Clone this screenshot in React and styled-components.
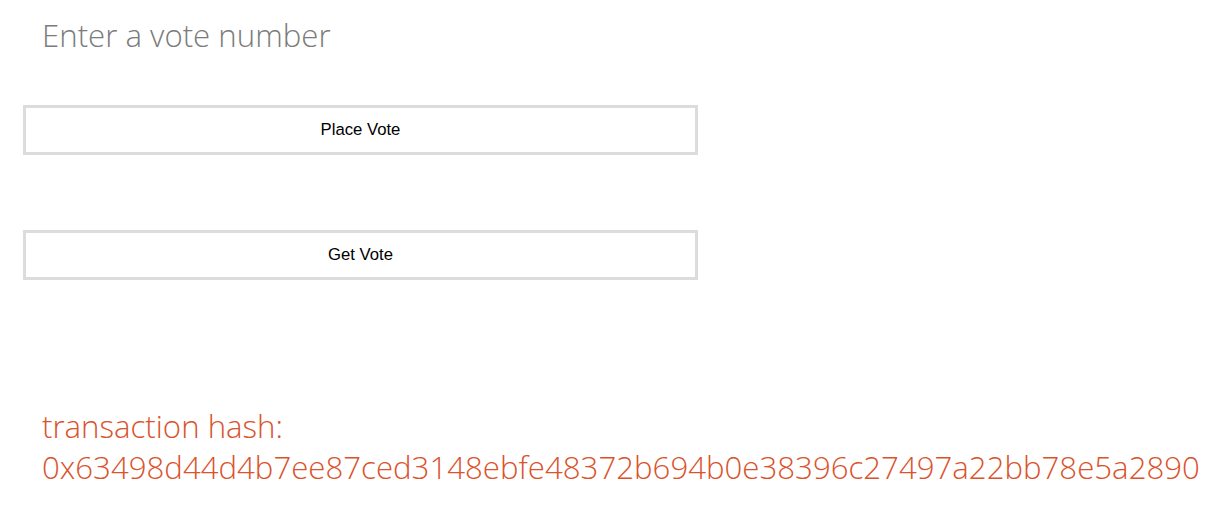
import React from "react";
import styled, { createGlobalStyle } from "styled-components";

const Global = createGlobalStyle`
  html, body { margin: 0; padding: 0; background: #fff; }
  body { font-family: "Open Sans", sans-serif; }
`;

const Page = styled.div`
  padding: 0 23px;
  display: flex;
  flex-direction: column;
`;

const VoteInput = styled.input`
  width: 675px;
  box-sizing: border-box;
  height: 70px;
  border: none;
  outline: none;
  padding: 0 0 0 19px;
  font-family: "Open Sans", sans-serif;
  font-weight: 300;
  font-size: 31.2px;
  color: #333;
  background: transparent;
  &::placeholder { color: #7b7b7b; }
`;

const Button = styled.button`
  width: 675px;
  height: 50px;
  box-sizing: border-box;
  border: 3px solid #dcdcdc;
  background: #fff;
  font-family: "Liberation Sans", Arial, sans-serif;
  font-size: 16.7px;
  color: #000;
  margin-top: ${p => p.$mt}px;
  cursor: pointer;
`;

const Hash = styled.div`
  margin-top: 126px;
  padding-left: 19px;
  font-family: "Open Sans", sans-serif;
  font-weight: 300;
  font-size: 31.2px;
  line-height: 41px;
  color: #da532c;
  word-break: break-all;
`;

export default function App() {
  return (
    <>
      <Global />
      <Page>
        <VoteInput placeholder="Enter a vote number" />
        <Button $mt={35}>Place Vote</Button>
        <Button $mt={75}>Get Vote</Button>
        <Hash>
          transaction hash:
          <br />
          0x63498d44d4b7ee87ced3148ebfe48372b694b0e38396c27497a22bb78e5a2890
        </Hash>
      </Page>
    </>
  );
}
